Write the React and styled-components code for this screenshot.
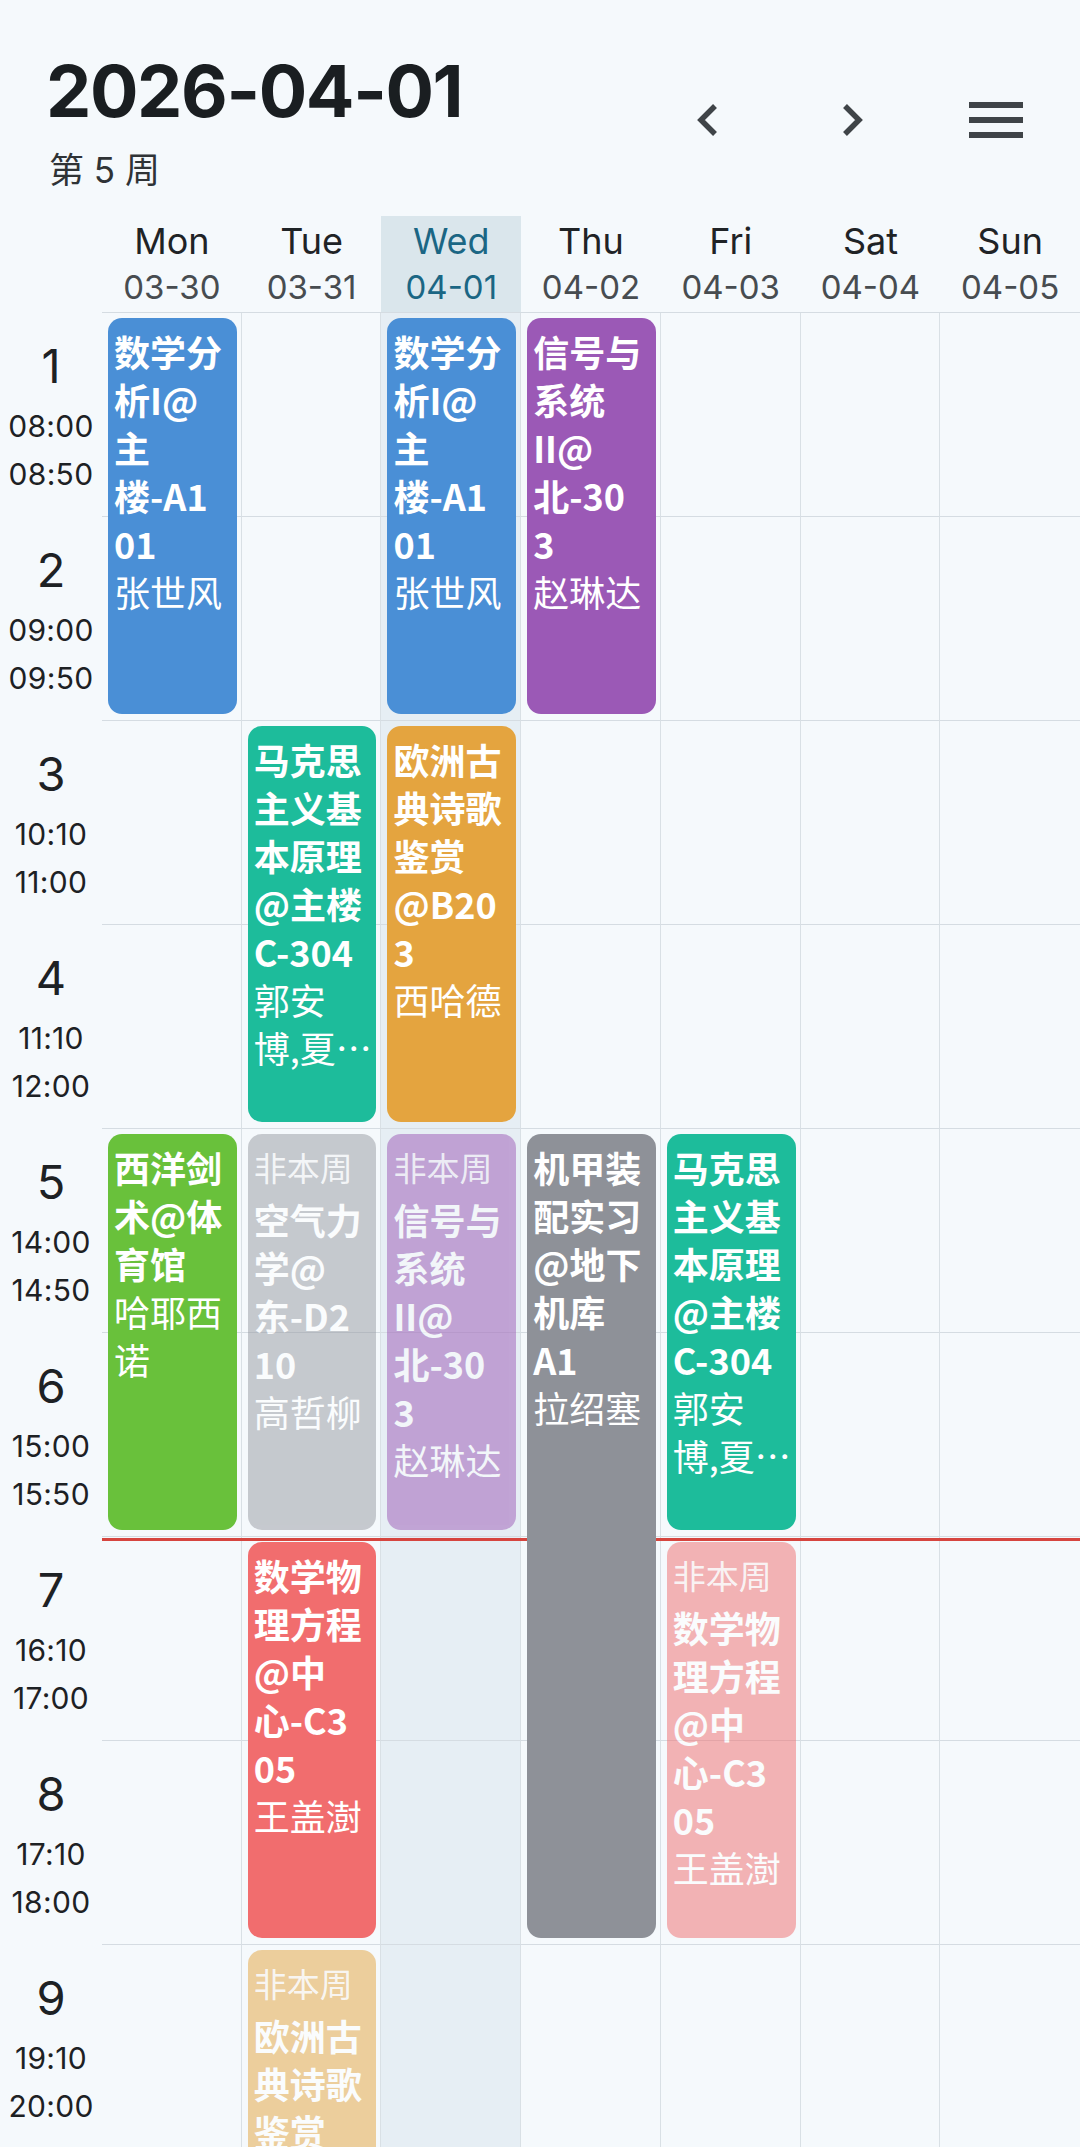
import React from 'react'
import styled, { createGlobalStyle } from 'styled-components'

const GlobalStyle = createGlobalStyle`
  html, body {
    margin: 0;
    padding: 0;
    background: #f5f9fc;
  }
  body {
    font-family: Inter, "Noto Sans CJK SC", sans-serif;
    color: #1b1f22;
  }
  * {
    box-sizing: border-box;
  }
`

const Page = styled.div`
  width: 1080px;
  background: #f5f9fc;
`

const TopBar = styled.header`
  display: flex;
  align-items: flex-start;
  padding: 55px 12px 0 46px;
`

const TitleBlock = styled.div`
  flex: 1;
  display: flex;
  flex-direction: column;
`

const DateTitle = styled.h1`
  margin: 0;
  font-family: Inter, sans-serif;
  font-weight: 700;
  font-size: 72px;
  line-height: 72px;
  letter-spacing: -1.4px;
  color: #1a1e21;
`

const WeekLabel = styled.div`
  margin-top: 22px;
  font-family: Inter, "Noto Sans CJK SC", sans-serif;
  font-size: 35px;
  line-height: 42px;
  color: #2f3336;
  padding-left: 3px;
`

const Actions = styled.nav`
  display: flex;
  margin-top: 29px;
`

const IconButton = styled.button`
  width: 144px;
  height: 72px;
  padding: 0;
  border: 0;
  background: none;
  display: flex;
  align-items: center;
  justify-content: center;
  color: #3f4448;
`

const DayHeader = styled.div`
  display: grid;
  grid-template-columns: 102px repeat(7, 1fr);
  margin-top: 25px;
`

const DayCell = styled.div`
  display: flex;
  flex-direction: column;
  align-items: center;
  gap: 5px;
  padding: 4px 0 5px;
  border-bottom: 1px solid #d5dce2;
  background: ${p => (p.$today ? '#dae6ec' : 'transparent')};
  color: ${p => (p.$today ? '#1b6684' : '#1f2326')};
`

const DayName = styled.span`
  font-size: 36px;
  line-height: 42px;
`

const DayDate = styled.span`
  font-size: 33px;
  line-height: 40px;
  color: ${p => (p.$today ? '#1b6684' : '#474c50')};
`

const Board = styled.div`
  position: relative;
  display: grid;
  grid-template-columns: 102px repeat(7, 1fr);
  grid-template-rows: repeat(12, 204px);
`

const Slot = styled.div`
  grid-column: ${p => p.$col + 2};
  grid-row: ${p => p.$row};
  border-bottom: 1px solid #d5dce2;
  border-right: ${p => (p.$col < 6 ? '1px solid #d9e0e5' : 'none')};
  background: ${p => (p.$today ? '#e6eef4' : 'transparent')};
`

const TimeCell = styled.div`
  grid-column: 1;
  grid-row: ${p => p.$row};
  display: flex;
  flex-direction: column;
  align-items: center;
  padding-top: 25px;
  color: #1d2124;
`

const PeriodNo = styled.span`
  font-size: 47px;
  line-height: 56px;
  margin-bottom: 8px;
`

const PeriodTime = styled.span`
  font-size: 30px;
  line-height: 48px;
  letter-spacing: 0.3px;
`

const NowLine = styled.div`
  grid-column: 2 / -1;
  grid-row: 7;
  align-self: start;
  height: 3px;
  margin-top: 1px;
  background: #d6453f;
  z-index: 1;
`

const Course = styled.div`
  grid-column: ${p => p.$col + 2};
  grid-row: ${p => p.$row} / span ${p => p.$span};
  z-index: 2;
  margin: 5px 5px 7px 6px;
  padding: 9px 3px 0 6px;
  border-radius: 14px;
  background: ${p => p.$color};
  opacity: ${p => (p.$faded ? 0.5 : 1)};
  color: #fff;
  font-family: "Noto Sans CJK SC", sans-serif;
  font-size: 36px;
  line-height: 48px;
  overflow: hidden;
`

const OffWeek = styled.div`
  font-size: 33px;
  line-height: 48px;
  margin-bottom: 4px;
  color: rgba(255, 255, 255, 0.9);
`

const CourseLine = styled.div`
  white-space: nowrap;
  font-weight: ${p => (p.$bold ? 700 : 400)};
`

const COLORS = {
  blue: '#4a8fd6',
  purple: '#9b59b6',
  teal: '#1dbc9b',
  orange: '#e4a43f',
  green: '#69c13b',
  gray: '#8e9198',
  red: '#f16d6e',
}

const DAYS = [
  ['Mon', '03-30'],
  ['Tue', '03-31'],
  ['Wed', '04-01'],
  ['Thu', '04-02'],
  ['Fri', '04-03'],
  ['Sat', '04-04'],
  ['Sun', '04-05'],
]
const TODAY = 2

const PERIODS = [
  ['08:00', '08:50'],
  ['09:00', '09:50'],
  ['10:10', '11:00'],
  ['11:10', '12:00'],
  ['14:00', '14:50'],
  ['15:00', '15:50'],
  ['16:10', '17:00'],
  ['17:10', '18:00'],
  ['19:10', '20:00'],
  ['20:10', '21:00'],
  ['21:10', '22:00'],
  ['22:10', '23:00'],
]

const MATH = { title: ['数学分', '析I@', '主', '楼-A1', '01'], teacher: ['张世风'], color: COLORS.blue }
const SIGNAL = { title: ['信号与', '系统', 'II@', '北-30', '3'], teacher: ['赵琳达'], color: COLORS.purple }
const MARX = { title: ['马克思', '主义基', '本原理', '@主楼', 'C-304'], teacher: ['郭安', '博,夏…'], color: COLORS.teal }
const POEM = { title: ['欧洲古', '典诗歌', '鉴赏', '@B20', '3'], teacher: ['西哈德'], color: COLORS.orange }
const PDE = { title: ['数学物', '理方程', '@中', '心-C3', '05'], teacher: ['王盖澍'], color: COLORS.red }

const COURSES = [
  { ...MATH, col: 0, row: 1, span: 2 },
  { title: ['西洋剑', '术@体', '育馆'], teacher: ['哈耶西', '诺'], color: COLORS.green, col: 0, row: 5, span: 2 },
  { ...MARX, col: 1, row: 3, span: 2 },
  { title: ['空气力', '学@', '东-D2', '10'], teacher: ['高哲柳'], color: '#979aa1', col: 1, row: 5, span: 2, faded: true },
  { ...PDE, col: 1, row: 7, span: 2 },
  { ...POEM, col: 1, row: 9, span: 2, faded: true },
  { ...MATH, col: 2, row: 1, span: 2 },
  { ...POEM, col: 2, row: 3, span: 2 },
  { ...SIGNAL, col: 2, row: 5, span: 2, faded: true },
  { ...SIGNAL, col: 3, row: 1, span: 2 },
  { title: ['机甲装', '配实习', '@地下', '机库', 'A1'], teacher: ['拉绍塞'], color: COLORS.gray, col: 3, row: 5, span: 4 },
  { ...MARX, col: 4, row: 5, span: 2 },
  { ...PDE, col: 4, row: 7, span: 2, faded: true },
]

function ChevronLeft() {
  return (
    <svg width="24" height="36" viewBox="0 0 24 36">
      <polyline points="19,4 5,18 19,32" fill="none" stroke="currentColor" strokeWidth="5.5" />
    </svg>
  )
}

function ChevronRight() {
  return (
    <svg width="24" height="36" viewBox="0 0 24 36">
      <polyline points="5,4 19,18 5,32" fill="none" stroke="currentColor" strokeWidth="5.5" />
    </svg>
  )
}

function MenuIcon() {
  return (
    <svg width="54" height="36" viewBox="0 0 54 36" fill="currentColor">
      <rect x="0" y="0" width="54" height="6" />
      <rect x="0" y="15" width="54" height="6" />
      <rect x="0" y="30" width="54" height="6" />
    </svg>
  )
}

export default function App() {
  const slots = []
  for (let r = 1; r <= PERIODS.length; r++) {
    for (let c = 0; c < 7; c++) {
      slots.push(<Slot key={`${r}-${c}`} $row={r} $col={c} $today={c === TODAY} />)
    }
  }

  return (
    <Page>
      <GlobalStyle />
      <TopBar>
        <TitleBlock>
          <DateTitle>2026-04-01</DateTitle>
          <WeekLabel>第 5 周</WeekLabel>
        </TitleBlock>
        <Actions>
          <IconButton aria-label="上一周"><ChevronLeft /></IconButton>
          <IconButton aria-label="下一周"><ChevronRight /></IconButton>
          <IconButton aria-label="菜单"><MenuIcon /></IconButton>
        </Actions>
      </TopBar>

      <DayHeader>
        <div />
        {DAYS.map(([name, date], i) => (
          <DayCell key={name} $today={i === TODAY}>
            <DayName>{name}</DayName>
            <DayDate $today={i === TODAY}>{date}</DayDate>
          </DayCell>
        ))}
      </DayHeader>

      <Board>
        {slots}
        {PERIODS.map(([start, end], i) => (
          <TimeCell key={start} $row={i + 1}>
            <PeriodNo>{i + 1}</PeriodNo>
            <PeriodTime>{start}</PeriodTime>
            <PeriodTime>{end}</PeriodTime>
          </TimeCell>
        ))}
        <NowLine />
        {COURSES.map((c, i) => (
          <Course key={i} $col={c.col} $row={c.row} $span={c.span} $color={c.color} $faded={c.faded}>
            {c.faded && <OffWeek>非本周</OffWeek>}
            {c.title.map((t, j) => (
              <CourseLine key={'t' + j} $bold>{t}</CourseLine>
            ))}
            {c.teacher.map((t, j) => (
              <CourseLine key={'p' + j}>{t}</CourseLine>
            ))}
          </Course>
        ))}
      </Board>
    </Page>
  )
}
